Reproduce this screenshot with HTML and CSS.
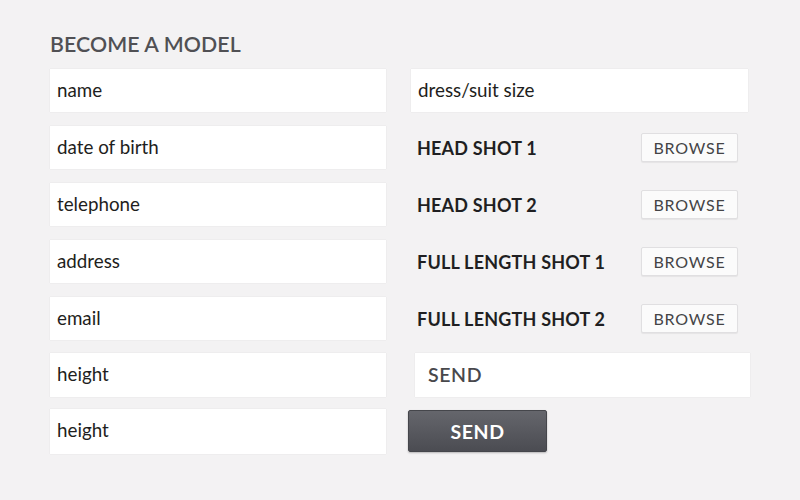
FILE: index.html
```html
<!DOCTYPE html>
<html>
<head>
<meta charset="utf-8">
<link rel="stylesheet" href="styles.css">
</head>
<body>
<div class="page">
  <h1 class="title">BECOME A MODEL</h1>
  <div class="form">
    <div class="col left">
      <div class="field">name</div>
      <div class="field">date of birth</div>
      <div class="field">telephone</div>
      <div class="field">address</div>
      <div class="field">email</div>
      <div class="field lift1">height</div>
      <div class="field lift2">height</div>
    </div>
    <div class="col right">
      <div class="field">dress/suit size</div>
      <div class="upload"><span class="label">HEAD SHOT 1</span><span class="browse">BROWSE</span></div>
      <div class="upload"><span class="label">HEAD SHOT 2</span><span class="browse">BROWSE</span></div>
      <div class="upload"><span class="label">FULL LENGTH SHOT 1</span><span class="browse">BROWSE</span></div>
      <div class="upload"><span class="label">FULL LENGTH SHOT 2</span><span class="browse">BROWSE</span></div>
      <div class="field send-field">SEND</div>
      <div class="send-row"><span class="send-btn">SEND</span></div>
    </div>
  </div>
</div>
</body>
</html>
```
FILE: styles.css
```css
html, body {
  margin: 0;
  padding: 0;
}
body {
  background: #f3f2f3;
  font-family: Lato, "Open Sans", sans-serif;
  width: 800px;
  height: 500px;
  overflow: hidden;
}
.page {
  padding: 32px 0 0 50px;
}
.title {
  margin: 0 0 12px 0;
  font-size: 21.3px;
  font-weight: 600;
  color: #505054;
  line-height: 25px;
  letter-spacing: 0.1px;
}
.form {
  display: flex;
  gap: 25px;
}
.col {
  display: grid;
  grid-template-rows: repeat(7, 43px);
  row-gap: 14px;
}
.left {
  width: 336px;
}
.right {
  width: 339px;
}
.field {
  background: #fff;
  box-shadow: 0 0 1px rgba(0,0,0,0.12);
  font-size: 18.8px;
  color: #1e1e20;
  line-height: 41px;
  padding-left: 7px;
}
.lift1 {
  margin-top: -1px;
}
.lift2 {
  margin-top: -2px;
}
.right > .field:first-child {
  width: 330px;
}
.upload {
  display: flex;
  align-items: center;
  justify-content: space-between;
  padding: 0 10px 0 6px;
  width: 321px;
}
.label {
  font-size: 18px;
  font-weight: 700;
  color: #1f1f22;
  letter-spacing: 0.2px;
}
.browse {
  width: 97px;
  height: 29px;
  box-sizing: border-box;
  border: 1px solid #e0dfe1;
  border-radius: 2px;
  background: #fbfbfb;
  box-shadow: 0 1px 1px rgba(0,0,0,0.06);
  display: flex;
  align-items: center;
  justify-content: center;
  font-size: 16px;
  color: #444446;
  letter-spacing: 0.8px;
}
.send-field {
  margin-left: 4px;
  margin-top: -1px;
  height: 44px;
  line-height: 44px;
  padding-left: 13px;
  font-size: 19.5px;
  font-weight: 600;
  color: #48484c;
  letter-spacing: 0.6px;
}
.send-row {
  display: flex;
  margin-left: -3px;
  margin-top: -1px;
}
.send-btn {
  width: 139px;
  height: 42px;
  box-sizing: border-box;
  border-radius: 2px;
  background: linear-gradient(#65666c, #4b4c52);
  border: 1px solid #45464b;
  box-shadow: 0 1px 2px rgba(0,0,0,0.25);
  color: #fff;
  font-size: 19.5px;
  font-weight: 700;
  letter-spacing: 0.6px;
  display: flex;
  align-items: center;
  justify-content: center;
}
```
